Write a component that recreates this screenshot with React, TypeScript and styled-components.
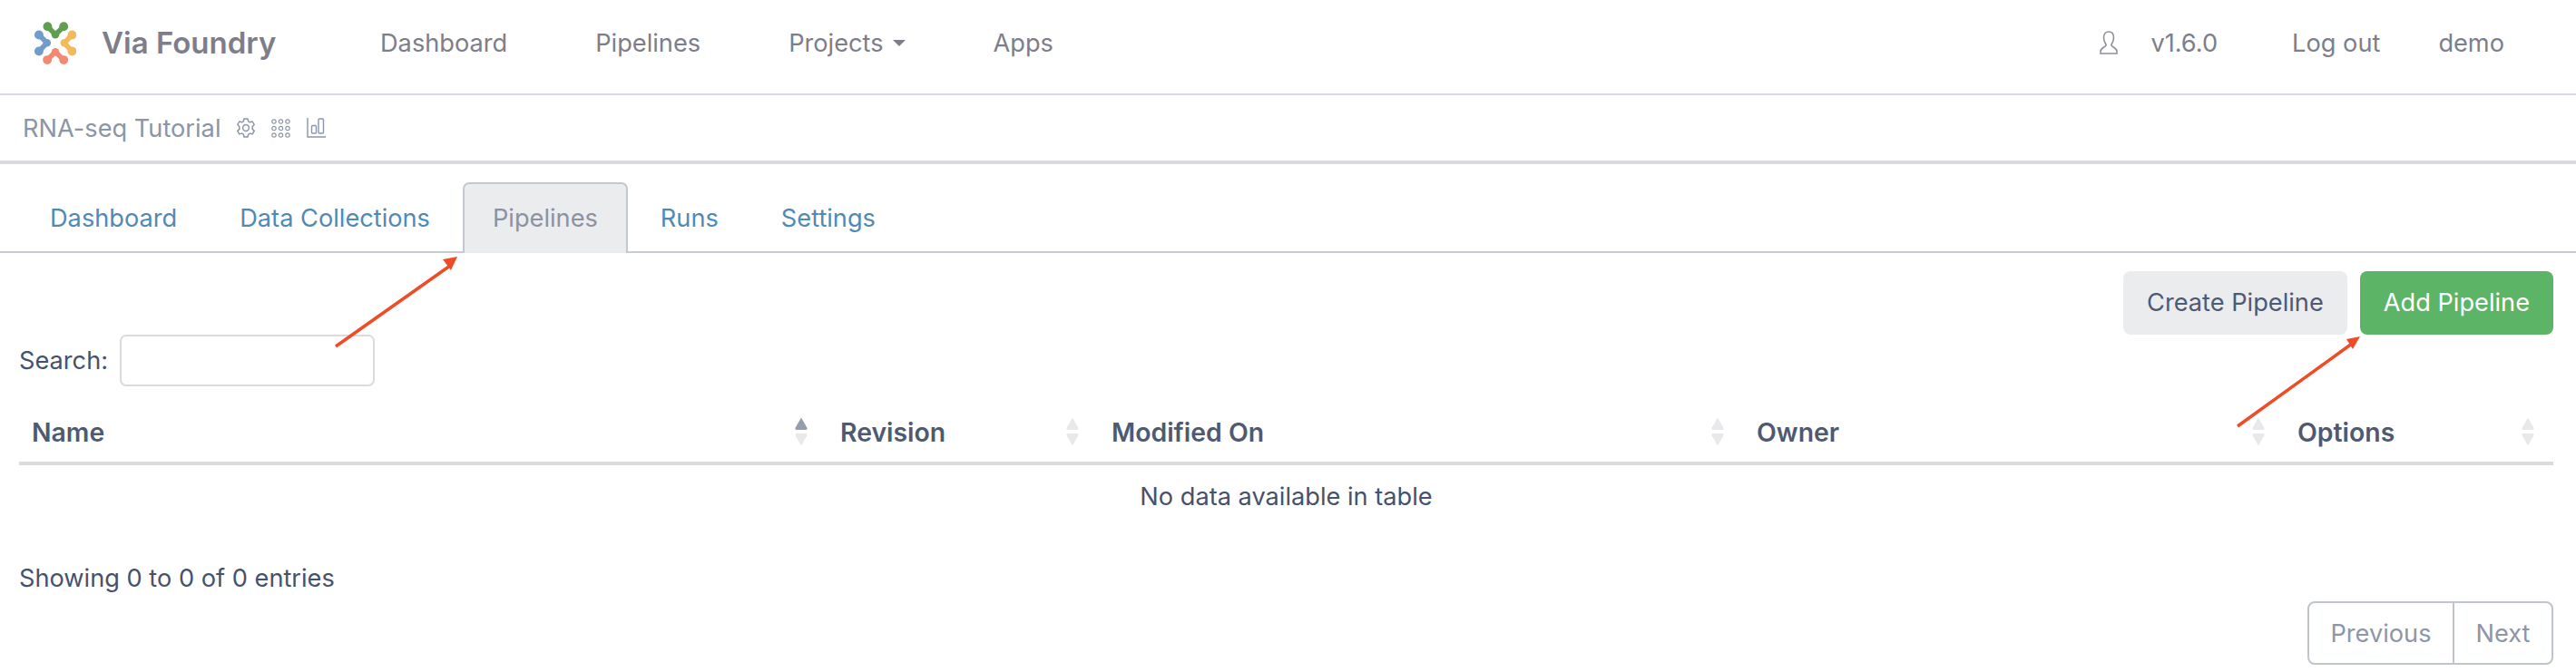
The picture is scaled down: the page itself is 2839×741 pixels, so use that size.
import styled, { createGlobalStyle } from "styled-components";

const GlobalStyle = createGlobalStyle`
  html, body {
    margin: 0;
    padding: 0;
    background: #ffffff;
    overflow: hidden;
  }
  body {
    font-family: Inter, "Liberation Sans", sans-serif;
    font-size: 27.2px;
    color: #46526c;
  }
`;

const Page = styled.div`
  position: relative;
  width: 2839px;
  height: 741px;
  overflow: hidden;
`;

const Navbar = styled.nav`
  height: 94px;
  border-bottom: 2px solid #dbdae3;
  display: flex;
  align-items: center;
  padding: 0 79px 9px 38px;
  color: #7d7e8a;
`;

const Brand = styled.div`
  display: flex;
  align-items: center;
  gap: 28px;
  width: 381px;
`;

const BrandName = styled.span`
  font-size: 33px;
  font-weight: 600;
`;

const NavLinks = styled.div`
  display: flex;
  align-items: center;
  gap: 97px;
`;

const NavLink = styled.a`
  display: flex;
  align-items: center;
  gap: 10px;
`;

const Caret = styled.span`
  width: 0;
  height: 0;
  border-top: 7px solid #7d7e8a;
  border-left: 7px solid transparent;
  border-right: 7px solid transparent;
`;

const NavRight = styled.div`
  margin-left: auto;
  display: flex;
  align-items: center;
`;

const NavRightItem = styled.span<{ $left: number }>`
  margin-left: ${(p) => p.$left}px;
`;

const SubBar = styled.div`
  height: 72px;
  border-bottom: 4px solid #d9dbde;
  display: flex;
  align-items: center;
  padding-left: 25px;
  color: #8b95a5;
`;

const SubIcons = styled.div`
  display: flex;
  align-items: center;
  gap: 18px;
  margin-left: 18px;
`;

const TabBar = styled.div`
  display: flex;
  gap: 3px;
  height: 78px;
  margin-top: 20px;
  padding-left: 22px;
  box-sizing: border-box;
  border-bottom: 2px solid #c6cad1;
`;

const Tab = styled.a<{ $active?: boolean }>`
  display: flex;
  align-items: center;
  height: 78px;
  box-sizing: border-box;
  padding: 0 31px 2px;
  color: ${(p) => (p.$active ? "#8b92a1" : "#5189b5")};
  background: ${(p) => (p.$active ? "#ebecee" : "transparent")};
  border: 2px solid ${(p) => (p.$active ? "#c3c7cf" : "transparent")};
  border-bottom: none;
  border-radius: 7px 7px 0 0;
`;

const Content = styled.div`
  padding: 20px 25px 0 21px;
`;

const ButtonRow = styled.div`
  display: flex;
  justify-content: flex-end;
  gap: 14px;
`;

const Button = styled.button<{ $primary?: boolean }>`
  height: 70px;
  padding: 0 26px 2px;
  border: none;
  border-radius: 8px;
  font: inherit;
  background: ${(p) => (p.$primary ? "#5cb467" : "#ebecee")};
  color: ${(p) => (p.$primary ? "#ffffff" : "#4e5a72")};
`;

const SearchRow = styled.label`
  display: flex;
  align-items: center;
  gap: 13px;
`;

const SearchInput = styled.input`
  width: 281px;
  height: 57px;
  box-sizing: border-box;
  border: 2px solid #d9dbde;
  border-radius: 7px;
  background: #ffffff;
`;

const Table = styled.table`
  width: 2793px;
  margin-top: 18px;
  table-layout: fixed;
  border-collapse: separate;
  border-spacing: 0;
`;

const HeadCell = styled.th<{ $width: number }>`
  width: ${(p) => p.$width}px;
  height: 69px;
  box-sizing: border-box;
  padding: 0 21px 1px 15px;
  border-bottom: 4px solid #d9dbde;
  font-size: 28.4px;
  font-weight: 600;
  text-align: left;
  color: #4e5a72;

  &:first-child {
    padding-left: 14px;
  }
`;

const HeadInner = styled.div`
  display: flex;
  align-items: center;
  justify-content: space-between;
`;

const SortArrows = styled.svg`
  display: block;
  width: 14px;
  height: 32px;
`;

const EmptyCell = styled.td`
  height: 68px;
  text-align: center;
  padding: 0;
`;

const Info = styled.div`
  line-height: 40px;
  margin-top: 37px;
`;

const PagerRow = styled.div`
  display: flex;
  justify-content: flex-end;
  margin-top: 5px;
`;

const Pager = styled.div`
  display: flex;
  height: 70px;
  box-sizing: border-box;
  border: 2px solid #bfc4cd;
  border-radius: 8px;
`;

const PagerLink = styled.a<{ $divider?: boolean }>`
  display: flex;
  align-items: center;
  padding: 0 23.5px;
  color: #8d96a6;
  border-left: ${(p) => (p.$divider ? "2px solid #bfc4cd" : "none")};
`;

const ArrowOverlay = styled.svg`
  position: absolute;
  left: 0;
  top: 0;
  width: 2839px;
  height: 741px;
  pointer-events: none;
`;

function Logo() {
  const groups = [
    { color: "#5f9f4f", pts: [[96, 55], [122, 82], [150, 55]] },
    { color: "#709dca", pts: [[67, 83], [94, 110], [67, 138]] },
    { color: "#f4b95a", pts: [[178, 83], [152, 110], [178, 138]] },
    { color: "#f18a70", pts: [[95, 167], [122, 140], [150, 167]] },
  ];
  return (
    <svg width="46" height="47" viewBox="52 39 140 143">
      {groups.map((g) => (
        <g key={g.color} fill={g.color}>
          <polyline
            points={g.pts.map((p) => p.join(",")).join(" ")}
            fill="none"
            stroke={g.color}
            strokeWidth="17"
            strokeLinejoin="round"
          />
          <circle cx={g.pts[0][0]} cy={g.pts[0][1]} r="15" />
          <circle cx={g.pts[1][0]} cy={g.pts[1][1]} r="13" />
          <circle cx={g.pts[2][0]} cy={g.pts[2][1]} r="15" />
        </g>
      ))}
    </svg>
  );
}

function UserIcon() {
  return (
    <svg width="20" height="26" viewBox="0 0 20 26" fill="none" stroke="#8f8f9a" strokeWidth="1.6">
      <path d="M10 1C7 1 4.500 3 4.500 7.500c0 3 1 5 2 6.500.7 1 .5 2.500-.5 3.200C4.500 18.300 1 19.500 1 22.500V25h18v-2.500c0-3-3.500-4.200-5-5.300-1-.7-1.200-2.200-.5-3.200 1-1.500 2-3.500 2-6.500C15.500 3 13 1 10 1z" />
    </svg>
  );
}

function GearIcon() {
  return (
    <svg width="20" height="22" viewBox="0 0 20 22" fill="none" stroke="#8b95a5" strokeWidth="1.5" strokeLinejoin="round">
      <path d="M8 1h4l.7 2.800 1.800 1 2.700-.8 2 3.500-2 2v2.900l2 2-2 3.500-2.700-.8-1.800 1L12 21H8l-.7-2.900-1.800-1-2.700.8-2-3.500 2-2V9.500l-2-2 2-3.500 2.700.8 1.800-1z" />
      <circle cx="10" cy="11" r="3.400" />
    </svg>
  );
}

function DotsIcon() {
  const spots = [3, 10.5, 18];
  return (
    <svg width="21" height="21" viewBox="0 0 21 21" fill="none" stroke="#8f98a7" strokeWidth="1.2">
      {spots.map((y) => spots.map((x) => <circle key={`${x}-${y}`} cx={x} cy={y} r="2.200" />))}
    </svg>
  );
}

function BarsIcon() {
  return (
    <svg width="21" height="22" viewBox="0 0 21 22" fill="none" stroke="#8b95a5" strokeWidth="1.4">
      <path d="M1 0v21h20" />
      <rect x="5.500" y="8.500" width="5" height="8.500" rx="1" />
      <rect x="13" y="1" width="5.500" height="16" rx="1" />
    </svg>
  );
}

function Sort({ active }: { active?: boolean }) {
  return (
    <SortArrows viewBox="0 0 14 32">
      <path d="M7 0.5 L13.600 12 Q14 14 12 14 H2 Q0 14 0.4 12 Z" fill={active ? "#959cac" : "#e8e9eb"} />
      <path d="M2 18 H12 Q14 18 13.600 20 L7 31.500 L0.4 20 Q0 18 2 18 Z" fill="#e8e9eb" />
    </SortArrows>
  );
}

const columns = [
  { name: "Name", width: 890, active: true },
  { name: "Revision", width: 299 },
  { name: "Modified On", width: 711 },
  { name: "Owner", width: 596 },
  { name: "Options", width: 297 },
];

export default function App() {
  return (
    <Page>
      <GlobalStyle />
      <Navbar>
        <Brand>
          <Logo />
          <BrandName>Via Foundry</BrandName>
        </Brand>
        <NavLinks>
          <NavLink>Dashboard</NavLink>
          <NavLink>Pipelines</NavLink>
          <NavLink>
            Projects <Caret />
          </NavLink>
          <NavLink>Apps</NavLink>
        </NavLinks>
        <NavRight>
          <UserIcon />
          <NavRightItem $left={36}>v1.6.0</NavRightItem>
          <NavRightItem $left={82}>Log out</NavRightItem>
          <NavRightItem $left={64}>demo</NavRightItem>
        </NavRight>
      </Navbar>
      <SubBar>
        RNA-seq Tutorial
        <SubIcons>
          <GearIcon />
          <DotsIcon />
          <BarsIcon />
        </SubIcons>
      </SubBar>
      <TabBar>
        <Tab>Dashboard</Tab>
        <Tab>Data Collections</Tab>
        <Tab $active>Pipelines</Tab>
        <Tab>Runs</Tab>
        <Tab>Settings</Tab>
      </TabBar>
      <Content>
        <ButtonRow>
          <Button>Create Pipeline</Button>
          <Button $primary>Add Pipeline</Button>
        </ButtonRow>
        <SearchRow>
          Search:
          <SearchInput />
        </SearchRow>
        <Table>
          <thead>
            <tr>
              {columns.map((c) => (
                <HeadCell key={c.name} $width={c.width}>
                  <HeadInner>
                    {c.name}
                    <Sort active={c.active} />
                  </HeadInner>
                </HeadCell>
              ))}
            </tr>
          </thead>
          <tbody>
            <tr>
              <EmptyCell colSpan={5}>No data available in table</EmptyCell>
            </tr>
          </tbody>
        </Table>
        <Info>Showing 0 to 0 of 0 entries</Info>
        <PagerRow>
          <Pager>
            <PagerLink>Previous</PagerLink>
            <PagerLink $divider>Next</PagerLink>
          </Pager>
        </PagerRow>
      </Content>
      <ArrowOverlay viewBox="0 0 2839 741">
        <line x1="370" y1="382" x2="496" y2="293" stroke="#ee4c27" strokeWidth="3.500" />
        <polygon points="504,283 488,286 497,298" fill="#ee4c27" />
        <line x1="2466" y1="470" x2="2592" y2="379" stroke="#ee4c27" strokeWidth="3.500" />
        <polygon points="2601,371 2586,374 2593,385" fill="#ee4c27" />
      </ArrowOverlay>
    </Page>
  );
}
